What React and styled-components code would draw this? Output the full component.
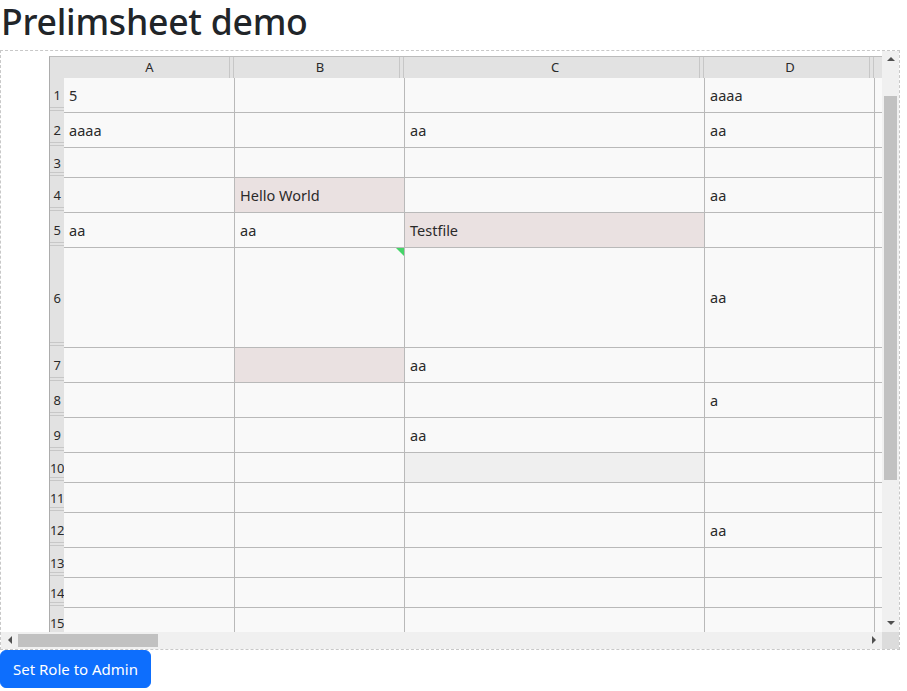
import React from "react";
import styled, { createGlobalStyle } from "styled-components";

const GlobalStyle = createGlobalStyle`
  html, body { margin: 0; padding: 0; background: #fff; }
  body {
    font-family: "Noto Sans", "Open Sans", sans-serif;
    color: #212529;
  }
  * { box-sizing: border-box; }
`;

const HEAD_BG = "#e2e2e2";
const HEAD_LINE = "#c7c7c7";
const GRID_LINE = "#b9b9b9";

const Page = styled.div`
  display: flex;
  flex-direction: column;
  align-items: flex-start;
`;

const Title = styled.h1`
  margin: 0 0 7px;
  padding-left: 1px;
  font-size: 35.6px;
  font-weight: 500;
  line-height: 1.2;
  letter-spacing: -0.25px;
`;

const Frame = styled.div`
  width: 900px;
  height: 600px;
  border: 1px dashed #c8c8c8;
  display: grid;
  grid-template-columns: minmax(0, 1fr) 17px;
  grid-template-rows: minmax(0, 1fr) 17px;
`;

const Viewport = styled.div`
  overflow: hidden;
  min-width: 0;
  min-height: 0;
  padding: 5px 0 0 48px;
`;

const Sheet = styled.div`
  display: flex;
  flex-direction: column;
  width: max-content;
  border-top: 1px solid #bcbcbc;
  border-left: 1px solid #acacac;
`;

const Row = styled.div`
  display: flex;
  flex-shrink: 0;
  height: ${(p) => p.$h}px;
`;

const Corner = styled.div`
  width: 14px;
  flex-shrink: 0;
  background: ${HEAD_BG};
`;

const ColHead = styled.div`
  width: ${(p) => p.$w}px;
  flex-shrink: 0;
  background: ${HEAD_BG};
  display: flex;
  align-items: center;
  justify-content: center;
  font-size: 13px;
  color: #2a2a2a;
  box-shadow: inset -1px 0 ${HEAD_BG}, inset -2px 0 ${HEAD_LINE},
    inset -5px 0 ${HEAD_BG}, inset -6px 0 ${HEAD_LINE};
`;

const RowHead = styled.div`
  width: 14px;
  flex-shrink: 0;
  background: ${HEAD_BG};
  display: flex;
  align-items: center;
  justify-content: center;
  font-size: 13px;
  letter-spacing: -0.5px;
  color: #2a2a2a;
  box-shadow: inset 0 -2px ${HEAD_BG}, inset 0 -3px ${HEAD_LINE},
    inset 0 -5px ${HEAD_BG}, inset 0 -6px ${HEAD_LINE};
`;

const toneBg = {
  plain: "#f9f9f9",
  mark: "#eae1e1",
  muted: "#efefef",
};

const Cell = styled.div`
  position: relative;
  width: ${(p) => p.$w}px;
  flex-shrink: 0;
  background: ${(p) => toneBg[p.$tone || "plain"]};
  border-right: 1px solid ${GRID_LINE};
  border-bottom: 1px solid ${GRID_LINE};
  display: flex;
  align-items: center;
  padding: 0 5px;
  font-size: 14.5px;
  color: #2a2a2a;
  white-space: nowrap;
  overflow: hidden;
`;

const CommentMark = styled.span`
  position: absolute;
  top: 0;
  right: 0;
  width: 0;
  height: 0;
  border-top: 8px solid #45d468;
  border-left: 8px solid transparent;
`;

const VBar = styled.div`
  background: #f0f0f0;
  display: flex;
  flex-direction: column;
  align-items: center;
`;

const HBar = styled.div`
  background: #f0f0f0;
  display: flex;
  align-items: center;
`;

const BarCorner = styled.div`
  background: #dcdcdc;
`;

const ArrowBox = styled.div`
  width: 17px;
  height: 17px;
  flex-shrink: 0;
  display: flex;
  align-items: center;
  justify-content: center;
`;

const Arrow = styled.span`
  width: 0;
  height: 0;
  ${(p) =>
    p.$dir === "up"
      ? `border-left: 4px solid transparent; border-right: 4px solid transparent; border-bottom: 4px solid #505050;`
      : p.$dir === "down"
      ? `border-left: 4px solid transparent; border-right: 4px solid transparent; border-top: 4px solid #505050;`
      : p.$dir === "left"
      ? `border-top: 4px solid transparent; border-bottom: 4px solid transparent; border-right: 4px solid #505050;`
      : `border-top: 4px solid transparent; border-bottom: 4px solid transparent; border-left: 4px solid #505050;`}
`;

const VTrack = styled.div`
  flex: 1;
  width: 100%;
  display: flex;
  flex-direction: column;
  align-items: center;
`;

const VThumb = styled.div`
  margin-top: 28px;
  width: 13px;
  height: 384px;
  background: #c1c1c1;
`;

const HTrack = styled.div`
  flex: 1;
  height: 100%;
  display: flex;
  align-items: center;
`;

const HThumb = styled.div`
  width: 140px;
  height: 13px;
  background: #c1c1c1;
`;

const Button = styled.button`
  font-family: inherit;
  font-size: 15px;
  line-height: 24px;
  color: #fff;
  background: #0d6efd;
  border: 1px solid #0d6efd;
  border-radius: 6px;
  padding: 6px 12px;
  height: 38px;
  cursor: pointer;
`;

const columns = [
  { key: "A", w: 171 },
  { key: "B", w: 170 },
  { key: "C", w: 300 },
  { key: "D", w: 170 },
  { key: "E", w: 170 },
];

const rows = [
  { h: 35, cells: { A: "5", D: "aaaa" } },
  { h: 35, cells: { A: "aaaa", C: "aa", D: "aa" } },
  { h: 30, cells: {} },
  { h: 35, cells: { B: "Hello World", D: "aa" }, tones: { B: "mark" } },
  { h: 35, cells: { A: "aa", B: "aa", C: "Testfile" }, tones: { C: "mark" } },
  { h: 100, cells: { D: "aa" }, marks: { B: true } },
  { h: 35, cells: { C: "aa" }, tones: { B: "mark" } },
  { h: 35, cells: { D: "a" } },
  { h: 35, cells: { C: "aa" } },
  { h: 30, cells: {}, tones: { C: "muted" } },
  { h: 30, cells: {} },
  { h: 35, cells: { D: "aa" } },
  { h: 30, cells: {} },
  { h: 30, cells: {} },
  { h: 30, cells: {} },
];

export default function App() {
  return (
    <Page>
      <GlobalStyle />
      <Title>Prelimsheet demo</Title>
      <Frame>
        <Viewport>
          <Sheet>
            <Row $h={21}>
              <Corner />
              {columns.map((c) => (
                <ColHead key={c.key} $w={c.w}>
                  {c.key}
                </ColHead>
              ))}
            </Row>
            {rows.map((r, i) => (
              <Row key={i} $h={r.h}>
                <RowHead>{i + 1}</RowHead>
                {columns.map((c) => (
                  <Cell key={c.key} $w={c.w} $tone={r.tones && r.tones[c.key]}>
                    {r.cells[c.key] || ""}
                    {r.marks && r.marks[c.key] && <CommentMark />}
                  </Cell>
                ))}
              </Row>
            ))}
          </Sheet>
        </Viewport>
        <VBar>
          <ArrowBox>
            <Arrow $dir="up" />
          </ArrowBox>
          <VTrack>
            <VThumb />
          </VTrack>
          <ArrowBox>
            <Arrow $dir="down" />
          </ArrowBox>
        </VBar>
        <HBar>
          <ArrowBox>
            <Arrow $dir="left" />
          </ArrowBox>
          <HTrack>
            <HThumb />
          </HTrack>
          <ArrowBox>
            <Arrow $dir="right" />
          </ArrowBox>
        </HBar>
        <BarCorner />
      </Frame>
      <Button type="button">Set Role to Admin</Button>
    </Page>
  );
}
